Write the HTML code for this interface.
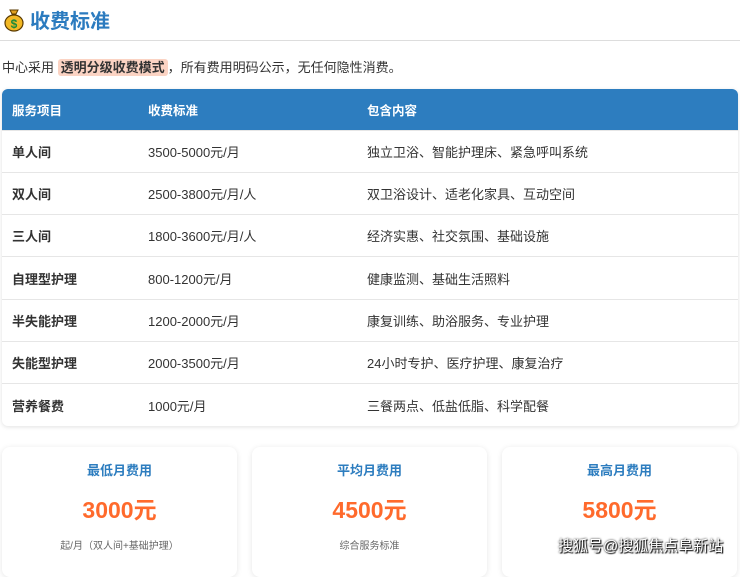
<!DOCTYPE html>
<html><head><meta charset="utf-8"><style>
*{margin:0;padding:0;box-sizing:border-box}
body{width:740px;height:562px;overflow:hidden;background:#fff;font-family:"Liberation Sans","Noto Sans CJK SC",sans-serif;color:#333;position:relative}
h1{position:absolute;left:30px;top:5px;font-size:20px;color:#2b7bbf;font-weight:bold}
.icon{position:absolute;left:3px;top:8px}
.hr{position:absolute;left:0;top:40px;width:740px;height:1px;background:#ddd}
.intro{position:absolute;left:2px;top:57px;font-size:13px}
.hl{background:#fbd3c3;border-radius:3px;padding:1px 3px;font-weight:bold}
table{position:absolute;left:2px;top:89px;width:736px;border-collapse:collapse;border-radius:6px;overflow:hidden;box-shadow:0 1px 4px rgba(0,0,0,.12);font-size:13px}
th{background:#2d7dbf;color:#fff;text-align:left;height:41px;font-weight:bold;font-size:12.5px}
td{height:42.3px;border-top:1px solid #e6e6e6}
td:first-child,th:first-child{padding-left:10px;font-weight:bold;width:146px}
td:nth-child(2){width:219px}
.card{position:absolute;top:447px;width:235px;height:130px;background:#fff;border-radius:8px;box-shadow:0 1px 6px rgba(0,0,0,.1);text-align:center}
.t{margin-top:13px;font-size:13px;font-weight:bold;color:#2d7dbf}
.v{margin-top:12px;font-size:23px;font-weight:bold;color:#ff6a2c}
.s{margin-top:12px;font-size:10px;color:#666}
.wm{position:absolute;left:558px;top:535px;font-size:15px;color:#fff;text-shadow:0 0 2px #000,1px 1px 1px #000}
</style></head><body>
<svg class="icon" width="22" height="24" viewBox="0 0 22 24"><path d="M7 2h8l-2 4h-4z" fill="#e0a020" stroke="#5a3a00" stroke-width="1"/><ellipse cx="11" cy="15" rx="9" ry="8" fill="#f2b824" stroke="#5a3a00" stroke-width="1.2"/><text x="11" y="20" font-size="12" font-weight="bold" text-anchor="middle" fill="#1a8a3a" font-family="Liberation Sans">$</text></svg>
<h1>收费标准</h1>
<div class="hr"></div>
<div class="intro">中心采用 <span class="hl">透明分级收费模式</span>，所有费用明码公示，无任何隐性消费。</div>
<table>
<tr><th>服务项目</th><th>收费标准</th><th>包含内容</th></tr>
<tr><td>单人间</td><td>3500-5000元/月</td><td>独立卫浴、智能护理床、紧急呼叫系统</td></tr>
<tr><td>双人间</td><td>2500-3800元/月/人</td><td>双卫浴设计、适老化家具、互动空间</td></tr>
<tr><td>三人间</td><td>1800-3600元/月/人</td><td>经济实惠、社交氛围、基础设施</td></tr>
<tr><td>自理型护理</td><td>800-1200元/月</td><td>健康监测、基础生活照料</td></tr>
<tr><td>半失能护理</td><td>1200-2000元/月</td><td>康复训练、助浴服务、专业护理</td></tr>
<tr><td>失能型护理</td><td>2000-3500元/月</td><td>24小时专护、医疗护理、康复治疗</td></tr>
<tr><td>营养餐费</td><td>1000元/月</td><td>三餐两点、低盐低脂、科学配餐</td></tr>
</table>
<div class="card" style="left:2px"><div class="t">最低月费用</div><div class="v">3000元</div><div class="s">起/月（双人间+基础护理）</div></div>
<div class="card" style="left:252px"><div class="t">平均月费用</div><div class="v">4500元</div><div class="s">综合服务标准</div></div>
<div class="card" style="left:502px"><div class="t">最高月费用</div><div class="v">5800元</div></div>
<div class="wm">搜狐号@搜狐焦点阜新站</div>
</body></html>
